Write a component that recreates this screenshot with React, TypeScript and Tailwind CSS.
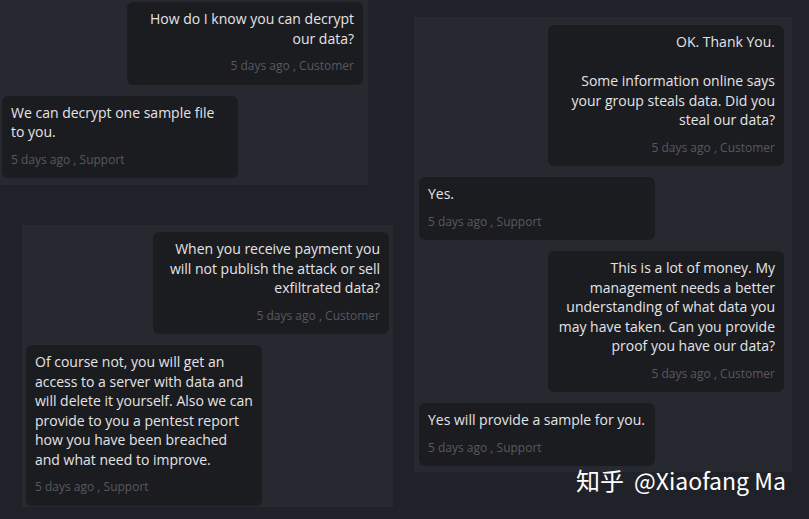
import React from 'react';

type Msg = {
  from: 'Customer' | 'Support';
  lines: string[];
};

const panelA: Msg[] = [
  { from: 'Customer', lines: ['How do I know you can decrypt', 'our data?'] },
  { from: 'Support', lines: ['We can decrypt one sample file', 'to you.'] },
];

const panelB: Msg[] = [
  {
    from: 'Customer',
    lines: ['OK. Thank You.', '', 'Some information online says', 'your group steals data. Did you', 'steal our data?'],
  },
  { from: 'Support', lines: ['Yes.'] },
  {
    from: 'Customer',
    lines: [
      'This is a lot of money. My',
      'management needs a better',
      'understanding of what data you',
      'may have taken. Can you provide',
      'proof you have our data?',
    ],
  },
  { from: 'Support', lines: ['Yes will provide a sample for you.'] },
];

const panelC: Msg[] = [
  {
    from: 'Customer',
    lines: ['When you receive payment you', 'will not publish the attack or sell', 'exfiltrated data?'],
  },
  {
    from: 'Support',
    lines: [
      'Of course not, you will get an',
      'access to a server with data and',
      'will delete it yourself. Also we can',
      'provide to you a pentest report',
      'how you have been breached',
      'and what need to improve.',
    ],
  },
];

const Bubble: React.FC<{ msg: Msg }> = ({ msg }) => {
  const mine = msg.from === 'Customer';
  return (
    <div
      className={`w-[236px] rounded-[6px] bg-[#1b1c20] px-[9px] pt-[7px] pb-[9.5px] ${
        mine ? 'self-end text-right' : 'self-start text-left'
      }`}
    >
      <div className="text-[14px] leading-[19.5px] text-[#e4e4e6]">
        {msg.lines.map((l, i) => (
          <div key={i} className="whitespace-nowrap">
            {l || '\u00a0'}
          </div>
        ))}
      </div>
      <div className="mt-[9px] text-[12px] leading-[18px] text-[#57595f]">5 days ago , {msg.from}</div>
    </div>
  );
};

const Panel: React.FC<{ msgs: Msg[]; className: string }> = ({ msgs, className }) => (
  <div className={`flex flex-col gap-[11px] bg-[#262930] ${className}`}>
    {msgs.map((m, i) => (
      <Bubble key={i} msg={m} />
    ))}
  </div>
);

export default function App() {
  return (
    <div
      className="relative h-[519px] w-[809px] overflow-hidden bg-[#1f2229]"
      style={{ fontFamily: '"Open Sans", "Noto Sans", sans-serif' }}
    >
      <div className="flex">
        <div className="flex w-[393px] flex-col">
          <Panel msgs={panelA} className="w-[368px] h-[185px] pl-[2px] pr-[5px] pb-[7px] justify-end" />
          <Panel msgs={panelC} className="ml-[22px] mt-[40px] w-[371px] h-[282px] px-[4px] pt-[7px]" />
        </div>
        <Panel msgs={panelB} className="ml-[21px] mt-[17px] w-[378px] h-[455px] pl-[5px] pr-[8px] pt-[8px]" />
      </div>

      {/* watermark */}
      <div
        className="absolute left-[576px] top-[465px] flex items-center gap-[10px] leading-[30px] text-white"
        style={{ fontFamily: '"Noto Sans CJK SC", "Noto Sans", sans-serif' }}
      >
        <span className="text-[24px]">知乎</span>
        <span className="text-[23px]">@Xiaofang Ma</span>
      </div>
    </div>
  );
}
